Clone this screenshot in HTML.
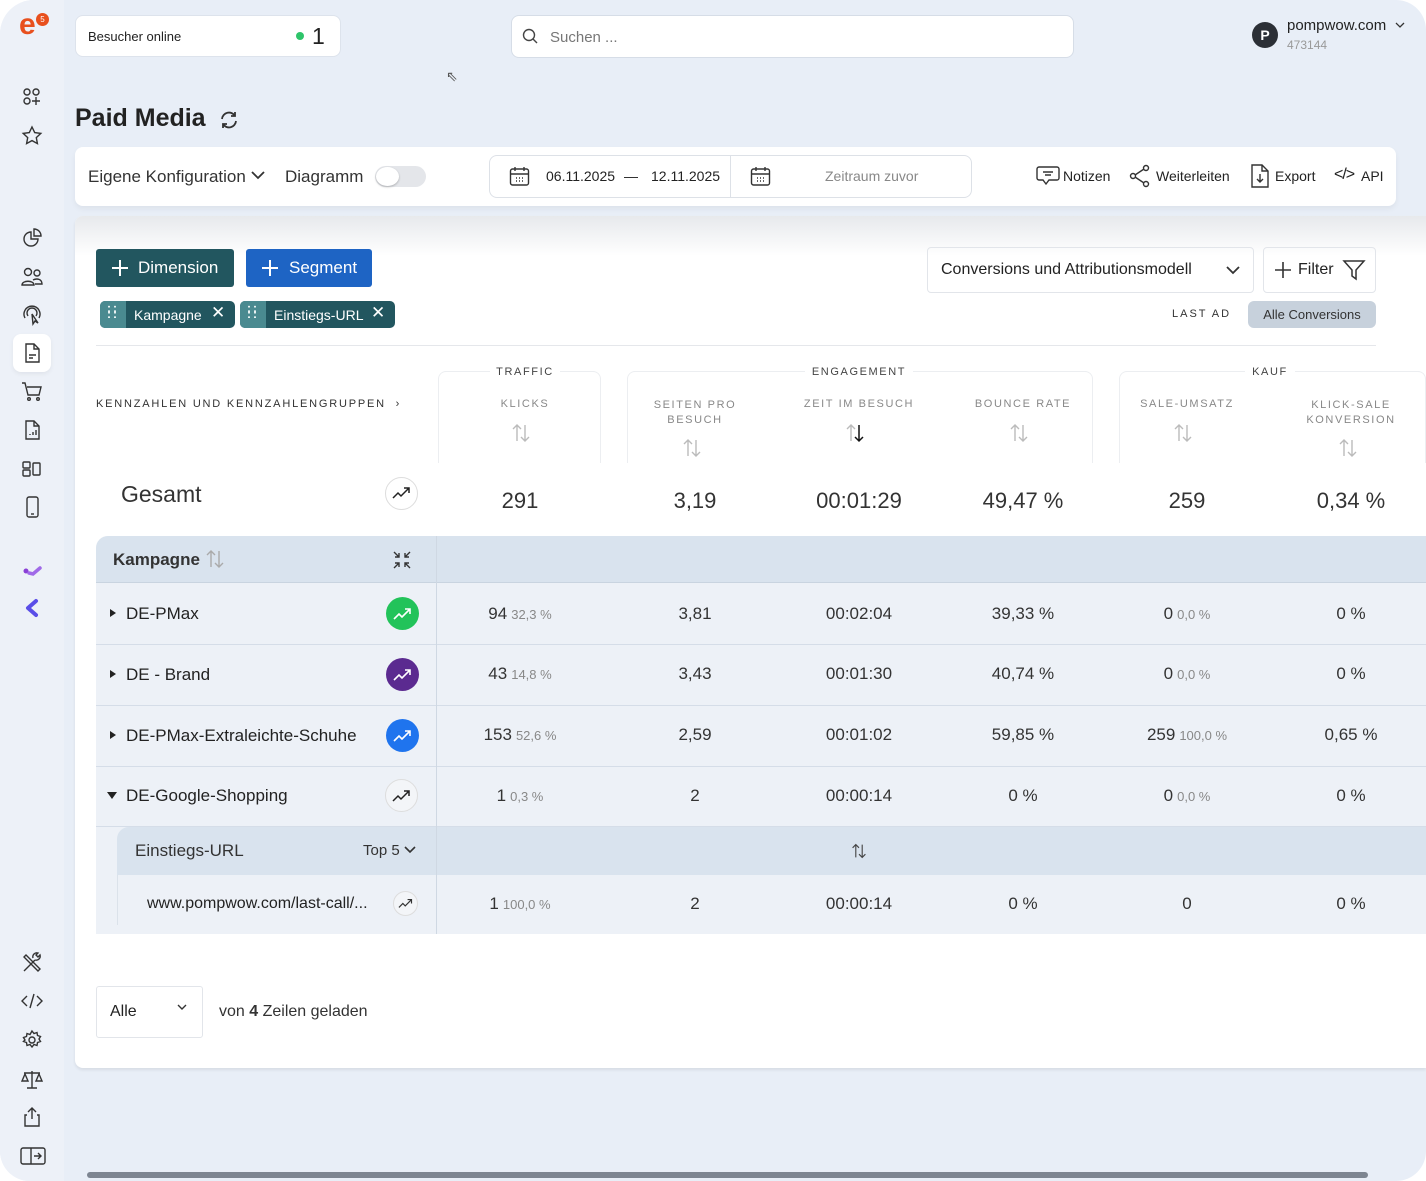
<!DOCTYPE html>
<html><head><meta charset="utf-8">
<style>
*{box-sizing:border-box;margin:0;padding:0}
body{width:1426px;height:1181px;overflow:hidden;background:#fff;font-family:"Liberation Sans",sans-serif;color:#222;position:relative}
.bg{position:absolute;left:0;top:0;width:1426px;height:1181px;background:#e8eef7;border-radius:34px 30px 30px 30px}
.side{position:absolute;left:0;top:0;width:64px;height:1181px;background:#edf1f8;border-radius:34px 0 0 30px}
.abs{position:absolute}
.ic{position:absolute;left:21px;width:22px;height:22px}
svg{overflow:visible}
.card{position:absolute;background:#fff;border-radius:8px}
.hdr{font-size:11px;letter-spacing:1.6px;color:#888;text-align:center;position:absolute}
.num{position:absolute;font-size:22px;color:#333;text-align:center;width:160px}
.cell{position:absolute;font-size:17px;color:#333;text-align:center;width:160px}
.cell small{font-size:13px;color:#888;margin-left:4px}
.row{position:absolute;left:96px;width:1330px;border-bottom:1px solid #d5dde8;background:#edf1f7}
.lbl{position:absolute;font-size:17px;color:#222}
.tri{position:absolute;width:0;height:0;border-top:4px solid transparent;border-bottom:4px solid transparent;border-left:6px solid #222}
.circ{position:absolute;width:33px;height:33px;border-radius:50%}
.sortic{stroke:#bbb;stroke-width:1.4;fill:none}
</style></head><body>
<div class="bg"></div>
<div class="side"></div>
<div class="abs" style="left:19px;top:10px;font-size:30px;font-weight:bold;color:#e8501e;line-height:30px">e</div>
<div class="abs" style="left:36px;top:13px;width:13px;height:13px;border-radius:50%;background:#e8501e;color:#fff;font-size:8px;text-align:center;line-height:13px">5</div>
<svg class="ic" style="top:86px" viewBox="0 0 22 22" fill="none" stroke="#333" stroke-width="1.4"><circle cx="6" cy="6" r="3"/><circle cx="15" cy="6" r="3"/><circle cx="6" cy="15" r="3"/><path d="M15 11v8M11 15h8"/></svg>
<svg class="ic" style="top:125px" viewBox="0 0 22 22" fill="none" stroke="#333" stroke-width="1.4"><path d="M11 2l2.7 5.6 6.1.8-4.5 4.2 1.1 6-5.4-3-5.4 3 1.1-6L2.2 8.4l6.1-.8z"/></svg>
<svg class="ic" style="top:227px" viewBox="0 0 22 22" fill="none" stroke="#333" stroke-width="1.4"><path d="M10 5a7 7 0 1 0 7 7h-7z"/><path d="M13 2a7 7 0 0 1 7 7h-7z"/></svg>
<svg class="ic" style="top:266px" viewBox="0 0 22 22" fill="none" stroke="#333" stroke-width="1.4"><circle cx="7" cy="6" r="3.5"/><circle cx="16" cy="7" r="3"/><path d="M1 19c0-5 12-5 12 0zM12 14c4-2 9-1 9 4h-7"/></svg>
<svg class="ic" style="top:304px" viewBox="0 0 22 22" fill="none" stroke="#333" stroke-width="1.4"><path d="M4 14a8 8 0 1 1 14 0M7 12a5 5 0 1 1 8 0"/><path d="M11 10l1 10 2-3 3 2z"/></svg>
<div class="abs" style="left:13px;top:334px;width:38px;height:38px;background:#fff;border-radius:8px;box-shadow:0 2px 5px rgba(0,0,0,.06)"></div>
<svg class="ic" style="top:342px" viewBox="0 0 22 22" fill="none" stroke="#333" stroke-width="1.4"><path d="M5 2h8l5 5v13H5z"/><path d="M13 2v5h5M8 13h7M8 16h4"/></svg>
<svg class="ic" style="top:380px" viewBox="0 0 22 22" fill="none" stroke="#333" stroke-width="1.4"><path d="M1 3h3l3 12h11l2-8H6"/><circle cx="8" cy="19" r="1.3"/><circle cx="17" cy="19" r="1.3"/></svg>
<svg class="ic" style="top:419px" viewBox="0 0 22 22" fill="none" stroke="#333" stroke-width="1.4"><path d="M5 2h8l5 5v13H5z"/><path d="M13 2v5h5M9 16v-1M12 16v-3M15 16v-5"/></svg>
<svg class="ic" style="top:458px" viewBox="0 0 22 22" fill="none" stroke="#333" stroke-width="1.4"><rect x="2" y="4" width="7" height="6" rx="1"/><rect x="2" y="12" width="7" height="6" rx="1"/><rect x="12" y="5" width="7" height="12" rx="1"/></svg>
<svg class="ic" style="top:496px" viewBox="0 0 22 22" fill="none" stroke="#333" stroke-width="1.4"><rect x="6" y="1" width="11" height="20" rx="2"/><path d="M10 18h3"/></svg>
<svg class="ic" style="top:560px" viewBox="0 0 22 22"><circle cx="5" cy="11" r="2.5" fill="#8a3fd6"/><path d="M8 13l4 1 7-6" stroke="#a06ae8" stroke-width="3.5" fill="none" stroke-linecap="round"/></svg>
<svg class="ic" style="top:598px" viewBox="0 0 22 22"><path d="M15 3l-8 7 8 7" stroke="#5a4ee8" stroke-width="4" fill="none" stroke-linecap="round" stroke-linejoin="round"/></svg>
<svg class="ic" style="top:952px" viewBox="0 0 22 22" fill="none" stroke="#333" stroke-width="1.4"><path d="M3 19L14 8M5 3l14 14-2 2L3 5zM14 8a4 4 0 0 0 5-5l-2 2-2-2 2-2a4 4 0 0 0-5 5"/></svg>
<svg class="ic" style="top:990px" viewBox="0 0 22 22" fill="none" stroke="#333" stroke-width="1.4"><path d="M6 6l-5 5 5 5M16 6l5 5-5 5M13 4l-4 14"/></svg>
<svg class="ic" style="top:1029px" viewBox="0 0 22 22" fill="none" stroke="#333" stroke-width="1.4"><circle cx="11" cy="11" r="3"/><path d="M11 2l2 2.5 3-1 .5 3 3 1-1.5 2.5 1.5 2.5-3 1-.5 3-3-1-2 2.5-2-2.5-3 1-.5-3-3-1L4 11 2.5 8.5l3-1 .5-3 3 1z"/></svg>
<svg class="ic" style="top:1068px" viewBox="0 0 22 22" fill="none" stroke="#333" stroke-width="1.4"><path d="M11 3v17M3 5h16M6 20h10M4 6l-3 7h6zM18 6l-3 7h6z"/></svg>
<svg class="ic" style="top:1106px" viewBox="0 0 22 22" fill="none" stroke="#333" stroke-width="1.4"><path d="M11 13V2M7 6l4-4 4 4M6 9H4v11h14V9h-2"/></svg>
<svg class="ic" style="top:1145px;width:26px;left:20px" viewBox="0 0 26 22" fill="none" stroke="#333" stroke-width="1.4"><rect x="1" y="3" width="24" height="16" rx="2"/><path d="M11 3v16M14 11h7M18 8l3 3-3 3"/></svg>

<div class="card" style="left:75px;top:15px;width:266px;height:42px;border:1px solid #dde3ec"></div>
<div class="abs" style="left:88px;top:29px;font-size:13px;color:#222">Besucher online</div>
<div class="abs" style="left:296px;top:32px;width:8px;height:8px;border-radius:50%;background:#2ec46a"></div>
<div class="abs" style="left:312px;top:23px;font-size:23px;color:#222">1</div>
<div class="card" style="left:511px;top:15px;width:563px;height:43px;border:1px solid #d6dde7"></div>
<svg class="abs" style="left:522px;top:28px" width="16" height="16" viewBox="0 0 16 16" fill="none" stroke="#444" stroke-width="1.4"><circle cx="7" cy="7" r="5.5"/><path d="M11 11l4 4"/></svg>
<div class="abs" style="left:550px;top:29px;font-size:15px;color:#777">Suchen ...</div>
<div class="abs" style="left:1252px;top:22px;width:26px;height:26px;border-radius:50%;background:#2b2f36;color:#fff;font-size:14px;font-weight:bold;text-align:center;line-height:26px">P</div>
<div class="abs" style="left:1287px;top:17px;font-size:15px;color:#222">pompwow.com</div>
<svg class="abs" style="left:1395px;top:22px" width="10" height="7" viewBox="0 0 10 7" fill="none" stroke="#333" stroke-width="1.3"><path d="M1 1l4 4 4-4"/></svg>
<div class="abs" style="left:1287px;top:38px;font-size:12px;color:#999">473144</div>

<div class="abs" style="left:75px;top:104px;font-size:25px;font-weight:bold;color:#222">Paid Media</div>
<svg class="abs" style="left:219px;top:110px" width="20" height="20" viewBox="0 0 20 20" fill="none" stroke="#333" stroke-width="1.8"><path d="M3 9a7 7 0 0 1 13-3M17 11a7 7 0 0 1-13 3"/><path d="M16 2v4h-4M4 18v-4h4"/></svg>

<div class="card" style="left:75px;top:147px;width:1321px;height:59px;box-shadow:0 3px 6px rgba(0,0,0,.05)"></div>
<div class="abs" style="left:88px;top:167px;font-size:17px;color:#333">Eigene Konfiguration</div>
<svg class="abs" style="left:251px;top:171px" width="14" height="9" viewBox="0 0 14 9" fill="none" stroke="#333" stroke-width="1.8"><path d="M1 1l6 6 6-6"/></svg>
<div class="abs" style="left:285px;top:167px;font-size:17px;color:#333">Diagramm</div>
<div class="abs" style="left:375px;top:166px;width:51px;height:21px;border-radius:11px;background:#e4e6ea"></div>
<div class="abs" style="left:376px;top:167px;width:23px;height:19px;border-radius:50%;background:#fff;box-shadow:0 1px 2px rgba(0,0,0,.25)"></div>
<div class="abs" style="left:489px;top:155px;width:483px;height:43px;border:1px solid #dde1e7;border-radius:8px"></div>
<div class="abs" style="left:730px;top:155px;width:1px;height:43px;background:#dde1e7"></div>
<svg class="abs" style="left:509px;top:166px" width="21" height="21" viewBox="0 0 21 21" fill="none" stroke="#333" stroke-width="1.4"><rect x="1.5" y="3" width="18" height="16" rx="2"/><path d="M1.5 8h18M6 1v4M15 1v4M7 12h1M10 12h1M13 12h1M7 15h1M10 15h1M13 15h1"/></svg>
<div class="abs" style="left:546px;top:168px;font-size:14px;color:#222">06.11.2025</div>
<div class="abs" style="left:624px;top:168px;font-size:14px;color:#222">—</div>
<div class="abs" style="left:651px;top:168px;font-size:14px;color:#222">12.11.2025</div>
<svg class="abs" style="left:750px;top:166px" width="21" height="21" viewBox="0 0 21 21" fill="none" stroke="#333" stroke-width="1.4"><rect x="1.5" y="3" width="18" height="16" rx="2"/><path d="M1.5 8h18M6 1v4M15 1v4M7 12h1M10 12h1M13 12h1M7 15h1M10 15h1M13 15h1"/></svg>
<div class="abs" style="left:825px;top:168px;font-size:14px;color:#888">Zeitraum zuvor</div>
<svg class="abs" style="left:1036px;top:165px" width="24" height="22" viewBox="0 0 24 22" fill="none" stroke="#333" stroke-width="1.4"><path d="M3 2h18a2 2 0 0 1 2 2v9a2 2 0 0 1-2 2h-8l-3 4-3-4H3a2 2 0 0 1-2-2V4a2 2 0 0 1 2-2zM7 7h10M9 10h6"/></svg>
<div class="abs" style="left:1063px;top:168px;font-size:14px;color:#222">Notizen</div>
<svg class="abs" style="left:1129px;top:164px" width="22" height="24" viewBox="0 0 22 24" fill="none" stroke="#333" stroke-width="1.4"><circle cx="4" cy="12" r="2.5"/><circle cx="17" cy="4" r="2.5"/><circle cx="17" cy="20" r="2.5"/><path d="M6 11l9-6M6 13l9 6"/></svg>
<div class="abs" style="left:1156px;top:168px;font-size:14px;color:#222">Weiterleiten</div>
<svg class="abs" style="left:1250px;top:164px" width="20" height="24" viewBox="0 0 20 24" fill="none" stroke="#333" stroke-width="1.4"><path d="M2 1h10l6 6v16H2z"/><path d="M12 1v6h6M10 10v8M7 15l3 3 3-3"/></svg>
<div class="abs" style="left:1275px;top:168px;font-size:14px;color:#222">Export</div>
<div class="abs" style="left:1334px;top:166px;font-size:16px;color:#222;letter-spacing:-1px">&lt;/&gt;</div>
<div class="abs" style="left:1361px;top:168px;font-size:14px;color:#222">API</div>

<div class="card" style="left:75px;top:216px;width:1351px;height:852px;border-radius:8px 0 0 8px;box-shadow:0 2px 3px rgba(0,0,0,.08)"></div>
<div class="abs" style="left:75px;top:216px;width:1351px;height:40px;background:linear-gradient(#e7e9ec,#fff);border-radius:8px 0 0 0"></div>

<div class="abs" style="left:96px;top:249px;width:138px;height:38px;background:#22565f;border-radius:3px;color:#fff;font-size:17px;line-height:38px;padding-left:42px">Dimension</div>
<svg class="abs" style="left:111px;top:259px" width="18" height="18" viewBox="0 0 18 18" stroke="#fff" stroke-width="2"><path d="M9 1v16M1 9h16"/></svg>
<div class="abs" style="left:246px;top:249px;width:126px;height:38px;background:#1e64c4;border-radius:3px;color:#fff;font-size:17px;line-height:38px;padding-left:43px">Segment</div>
<svg class="abs" style="left:261px;top:259px" width="18" height="18" viewBox="0 0 18 18" stroke="#fff" stroke-width="2"><path d="M9 1v16M1 9h16"/></svg>

<div class="abs" style="left:100px;top:301px;width:135px;height:27px;background:#22565f;border-radius:5px;overflow:hidden"><div style="width:26px;height:27px;background:#4a8a90"></div></div>
<div class="abs" style="left:107px;top:305px;color:#fff;font-size:12px;font-weight:bold;line-height:6px;letter-spacing:2px">::<br>::</div>
<div class="abs" style="left:134px;top:307px;font-size:14px;color:#fff">Kampagne</div>
<div class="abs" style="left:211px;top:303px;font-size:17px;color:#fff">✕</div>
<div class="abs" style="left:240px;top:301px;width:155px;height:27px;background:#22565f;border-radius:5px;overflow:hidden"><div style="width:26px;height:27px;background:#4a8a90"></div></div>
<div class="abs" style="left:247px;top:305px;color:#fff;font-size:12px;font-weight:bold;line-height:6px;letter-spacing:2px">::<br>::</div>
<div class="abs" style="left:274px;top:307px;font-size:14px;color:#fff">Einstiegs-URL</div>
<div class="abs" style="left:371px;top:303px;font-size:17px;color:#fff">✕</div>

<div class="abs" style="left:927px;top:247px;width:327px;height:46px;border:1px solid #e2e5ea;border-radius:4px"></div>
<div class="abs" style="left:941px;top:261px;font-size:16px;color:#222">Conversions und Attributionsmodell</div>
<svg class="abs" style="left:1226px;top:266px" width="14" height="9" viewBox="0 0 14 9" fill="none" stroke="#333" stroke-width="1.8"><path d="M1 1l6 6 6-6"/></svg>
<div class="abs" style="left:1263px;top:247px;width:113px;height:46px;border:1px solid #e2e5ea;border-radius:4px"></div>
<svg class="abs" style="left:1275px;top:262px" width="16" height="16" viewBox="0 0 16 16" stroke="#333" stroke-width="1.6"><path d="M8 0v16M0 8h16"/></svg>
<div class="abs" style="left:1298px;top:261px;font-size:16px;color:#222">Filter</div>
<svg class="abs" style="left:1343px;top:260px" width="22" height="20" viewBox="0 0 22 20" fill="none" stroke="#333" stroke-width="1.5"><path d="M1 1h20l-8 9v9l-4-3v-6z"/></svg>
<div class="abs" style="left:1172px;top:308px;font-size:11px;letter-spacing:2px;color:#333">LAST AD</div>
<div class="abs" style="left:1248px;top:301px;width:128px;height:27px;background:#c7d1dc;border-radius:6px;font-size:13px;color:#333;text-align:center;line-height:27px">Alle Conversions</div>
<div class="abs" style="left:96px;top:345px;width:1280px;height:1px;background:#e5e7eb"></div>

<div class="abs" style="left:438px;top:371px;width:163px;height:92px;border:1px solid #eceef1;border-bottom:none;border-radius:8px 8px 0 0"></div>
<div class="abs" style="left:627px;top:371px;width:466px;height:92px;border:1px solid #eceef1;border-bottom:none;border-radius:8px 8px 0 0"></div>
<div class="abs" style="left:1119px;top:371px;width:307px;height:92px;border:1px solid #eceef1;border-bottom:none;border-radius:8px 8px 0 0"></div>
<div class="hdr" style="left:490px;top:366px;width:70px;background:#fff;color:#444">TRAFFIC</div>
<div class="hdr" style="left:805px;top:366px;width:108px;background:#fff;color:#444">ENGAGEMENT</div>
<div class="hdr" style="left:1245px;top:366px;width:50px;background:#fff;color:#444">KAUF</div>
<div class="abs" style="left:96px;top:398px;font-size:11px;letter-spacing:1.8px;color:#333">KENNZAHLEN UND KENNZAHLENGRUPPEN &nbsp;›</div>
<div class="hdr" style="left:445px;top:398px;width:160px">KLICKS</div>
<div class="hdr" style="left:615px;top:398px;width:160px;line-height:15px">SEITEN PRO<br>BESUCH</div>
<div class="hdr" style="left:779px;top:398px;width:160px">ZEIT IM BESUCH</div>
<div class="hdr" style="left:943px;top:398px;width:160px">BOUNCE RATE</div>
<div class="hdr" style="left:1107px;top:398px;width:160px">SALE-UMSATZ</div>
<div class="hdr" style="left:1271px;top:398px;width:160px;line-height:15px">KLICK-SALE<br>KONVERSION</div>
<svg class="abs" style="left:511px;top:423px" width="20" height="20" viewBox="0 0 20 20"><path class="sortic" d="M6 18V2M2 6l4-4 4 4M14 2v16M10 14l4 4 4-4"/></svg>
<svg class="abs" style="left:682px;top:438px" width="20" height="20" viewBox="0 0 20 20"><path class="sortic" d="M6 18V2M2 6l4-4 4 4M14 2v16M10 14l4 4 4-4"/></svg>
<svg class="abs" style="left:845px;top:423px" width="20" height="20" viewBox="0 0 20 20"><path class="sortic" d="M6 18V2M2 6l4-4 4 4"/><path d="M14 2v16M10 14l4 4 4-4" stroke="#111" stroke-width="1.5" fill="none"/></svg>
<svg class="abs" style="left:1009px;top:423px" width="20" height="20" viewBox="0 0 20 20"><path class="sortic" d="M6 18V2M2 6l4-4 4 4M14 2v16M10 14l4 4 4-4"/></svg>
<svg class="abs" style="left:1173px;top:423px" width="20" height="20" viewBox="0 0 20 20"><path class="sortic" d="M6 18V2M2 6l4-4 4 4M14 2v16M10 14l4 4 4-4"/></svg>
<svg class="abs" style="left:1338px;top:438px" width="20" height="20" viewBox="0 0 20 20"><path class="sortic" d="M6 18V2M2 6l4-4 4 4M14 2v16M10 14l4 4 4-4"/></svg>

<div class="abs" style="left:121px;top:481px;font-size:23px;color:#333">Gesamt</div>
<div class="circ" style="left:385px;top:477px;border:1px solid #ddd;background:#fff"></div>
<svg class="abs" style="left:392px;top:486px" width="20" height="14" viewBox="0 0 20 14" fill="none" stroke="#222" stroke-width="1.5"><path d="M1 12l5-5 3 3 8-8M12 2h5v5"/></svg>
<div class="num" style="left:440px;top:488px">291</div>
<div class="num" style="left:615px;top:488px">3,19</div>
<div class="num" style="left:779px;top:488px">00:01:29</div>
<div class="num" style="left:943px;top:488px">49,47 %</div>
<div class="num" style="left:1107px;top:488px">259</div>
<div class="num" style="left:1271px;top:488px">0,34 %</div>

<div class="abs" style="left:96px;top:536px;width:1330px;height:398px;background:#edf1f7;border-radius:12px 0 0 0"></div>
<div class="abs" style="left:96px;top:536px;width:1330px;height:47px;background:#d9e3ee;border-radius:12px 0 0 0;border-bottom:1px solid #c9d4e0"></div>
<div class="abs" style="left:436px;top:536px;width:1px;height:398px;background:#cfd8e3"></div>
<div class="lbl" style="left:113px;top:550px;font-weight:bold;color:#333">Kampagne</div>
<svg class="abs" style="left:205px;top:549px" width="20" height="20" viewBox="0 0 20 20"><path class="sortic" d="M6 18V2M2 6l4-4 4 4M14 2v16M10 14l4 4 4-4" style="stroke:#aaa"/></svg>
<svg class="abs" style="left:392px;top:550px" width="20" height="20" viewBox="0 0 20 20" fill="none" stroke="#333" stroke-width="1.4"><path d="M2 2l5 5M7 3v4H3M18 2l-5 5M13 3v4h4M2 18l5-5M3 13h4v4M18 18l-5-5M17 13h-4v4"/></svg>

<div class="row" style="top:583px;height:62px"></div>
<div class="row" style="top:645px;height:61px"></div>
<div class="row" style="top:706px;height:61px"></div>
<div class="row" style="top:767px;height:60px"></div>
<div class="abs" style="left:436px;top:583px;width:1px;height:351px;background:#cfd8e3"></div>

<div class="tri" style="left:110px;top:609px"></div>
<div class="lbl" style="left:126px;top:604px">DE-PMax</div>
<div class="circ" style="left:386px;top:597px;background:#22c35a"></div>
<div class="tri" style="left:110px;top:670px"></div>
<div class="lbl" style="left:126px;top:665px">DE - Brand</div>
<div class="circ" style="left:386px;top:658px;background:#5b2a90"></div>
<div class="tri" style="left:110px;top:731px"></div>
<div class="lbl" style="left:126px;top:726px">DE-PMax-Extraleichte-Schuhe</div>
<div class="circ" style="left:386px;top:719px;background:#1f74ee"></div>
<div class="abs" style="left:107px;top:792px;width:0;height:0;border-left:5px solid transparent;border-right:5px solid transparent;border-top:7px solid #222"></div>
<div class="lbl" style="left:126px;top:786px">DE-Google-Shopping</div>
<div class="circ" style="left:385px;top:779px;border:1px solid #ddd;background:#f3f5f8"></div>
<svg class="abs" style="left:393px;top:607px" width="20" height="14" viewBox="0 0 20 14" fill="none" stroke="#fff" stroke-width="1.6"><path d="M1 12l5-5 3 3 8-8M12 2h5v5"/></svg>
<svg class="abs" style="left:393px;top:668px" width="20" height="14" viewBox="0 0 20 14" fill="none" stroke="#fff" stroke-width="1.6"><path d="M1 12l5-5 3 3 8-8M12 2h5v5"/></svg>
<svg class="abs" style="left:393px;top:729px" width="20" height="14" viewBox="0 0 20 14" fill="none" stroke="#fff" stroke-width="1.6"><path d="M1 12l5-5 3 3 8-8M12 2h5v5"/></svg>
<svg class="abs" style="left:392px;top:789px" width="20" height="14" viewBox="0 0 20 14" fill="none" stroke="#222" stroke-width="1.5"><path d="M1 12l5-5 3 3 8-8M12 2h5v5"/></svg>

<div class="abs" style="left:117px;top:827px;width:1309px;height:48px;background:#d9e3ee;border-radius:12px 0 0 0"></div>
<div class="abs" style="left:436px;top:827px;width:1px;height:107px;background:#cfd8e3"></div>
<div class="abs" style="left:117px;top:875px;width:1px;height:50px;background:#dbe2ea"></div>
<div class="lbl" style="left:135px;top:841px;color:#333">Einstiegs-URL</div>
<div class="abs" style="left:363px;top:842px;font-size:15px;color:#333">Top 5</div>
<svg class="abs" style="left:404px;top:846px" width="12" height="8" viewBox="0 0 12 8" fill="none" stroke="#333" stroke-width="1.6"><path d="M1 1l5 5 5-5"/></svg>
<svg class="abs" style="left:851px;top:843px" width="16" height="16" viewBox="0 0 20 20"><path d="M6 18V2M2 6l4-4 4 4M14 2v16M10 14l4 4 4-4" stroke="#444" stroke-width="1.4" fill="none"/></svg>
<div class="lbl" style="left:147px;top:895px;font-size:16px">www.pompwow.com/last-call/...</div>
<div class="circ" style="left:393px;top:891px;width:25px;height:25px;border:1px solid #ddd;background:#f3f5f8"></div>
<svg class="abs" style="left:398px;top:898px" width="16" height="11" viewBox="0 0 20 14" fill="none" stroke="#333" stroke-width="1.5"><path d="M1 12l5-5 3 3 8-8M12 2h5v5"/></svg>

<div class="cell" style="left:440px;top:604px">94<small>32,3 %</small></div>
<div class="cell" style="left:615px;top:604px">3,81</div>
<div class="cell" style="left:779px;top:604px">00:02:04</div>
<div class="cell" style="left:943px;top:604px">39,33 %</div>
<div class="cell" style="left:1107px;top:604px">0<small>0,0 %</small></div>
<div class="cell" style="left:1271px;top:604px">0 %</div>
<div class="cell" style="left:440px;top:664px">43<small>14,8 %</small></div>
<div class="cell" style="left:615px;top:664px">3,43</div>
<div class="cell" style="left:779px;top:664px">00:01:30</div>
<div class="cell" style="left:943px;top:664px">40,74 %</div>
<div class="cell" style="left:1107px;top:664px">0<small>0,0 %</small></div>
<div class="cell" style="left:1271px;top:664px">0 %</div>
<div class="cell" style="left:440px;top:725px">153<small>52,6 %</small></div>
<div class="cell" style="left:615px;top:725px">2,59</div>
<div class="cell" style="left:779px;top:725px">00:01:02</div>
<div class="cell" style="left:943px;top:725px">59,85 %</div>
<div class="cell" style="left:1107px;top:725px">259<small>100,0 %</small></div>
<div class="cell" style="left:1271px;top:725px">0,65 %</div>
<div class="cell" style="left:440px;top:786px">1<small>0,3 %</small></div>
<div class="cell" style="left:615px;top:786px">2</div>
<div class="cell" style="left:779px;top:786px">00:00:14</div>
<div class="cell" style="left:943px;top:786px">0 %</div>
<div class="cell" style="left:1107px;top:786px">0<small>0,0 %</small></div>
<div class="cell" style="left:1271px;top:786px">0 %</div>
<div class="cell" style="left:440px;top:894px">1<small>100,0 %</small></div>
<div class="cell" style="left:615px;top:894px">2</div>
<div class="cell" style="left:779px;top:894px">00:00:14</div>
<div class="cell" style="left:943px;top:894px">0 %</div>
<div class="cell" style="left:1107px;top:894px">0</div>
<div class="cell" style="left:1271px;top:894px">0 %</div>

<div class="abs" style="left:96px;top:986px;width:107px;height:52px;border:1px solid #e2e5ea;border-radius:3px"></div>
<div class="abs" style="left:110px;top:1003px;font-size:16px;color:#222">Alle</div>
<svg class="abs" style="left:177px;top:1004px" width="10" height="7" viewBox="0 0 10 7" fill="none" stroke="#333" stroke-width="1.4"><path d="M1 1l4 4 4-4"/></svg>
<div class="abs" style="left:219px;top:1003px;font-size:16px;color:#333">von <b>4</b> Zeilen geladen</div>

<div class="abs" style="left:87px;top:1172px;width:1281px;height:6px;border-radius:3px;background:#7d8591"></div>
<div class="abs" style="left:446px;top:68px;font-size:14px;color:#555">⇖</div>
</body></html>
